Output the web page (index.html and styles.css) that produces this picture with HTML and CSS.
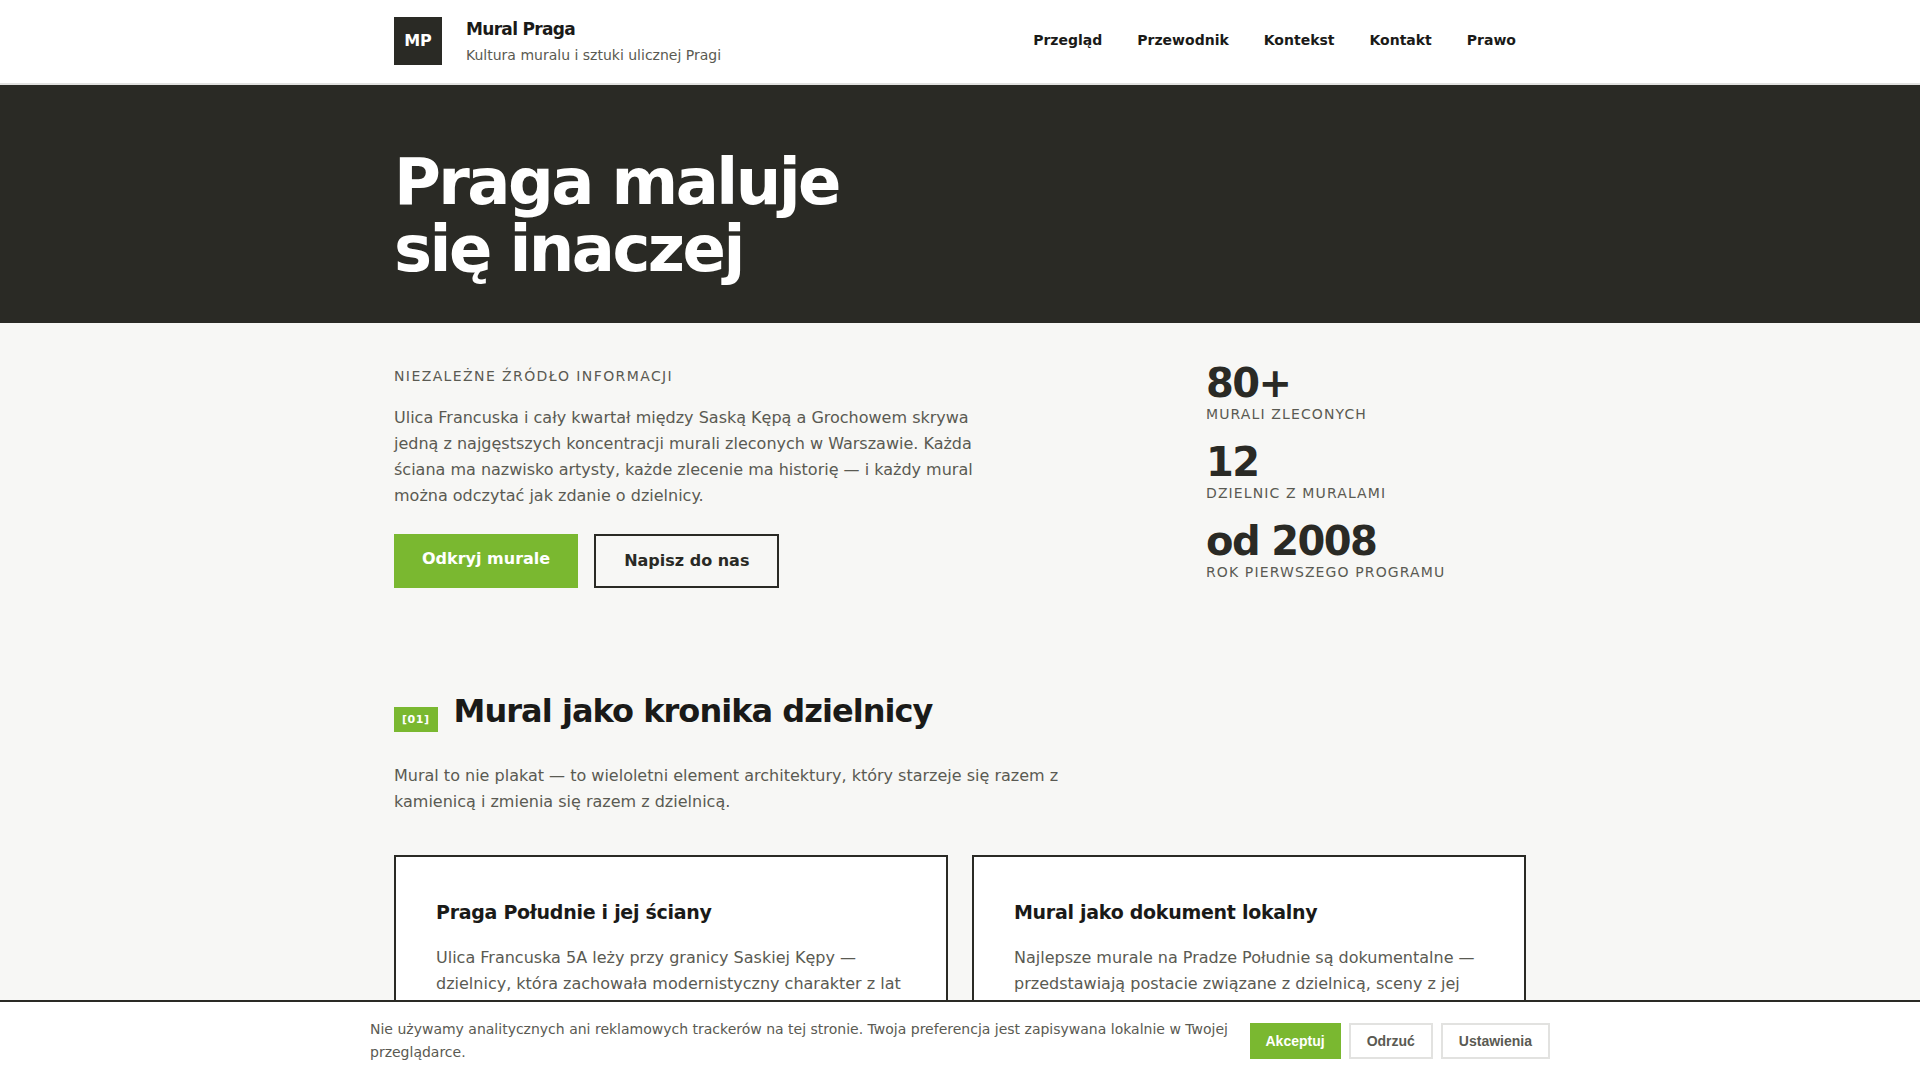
FILE: index.html
```html
<!DOCTYPE html>
<html lang="pl">

<head>
  <meta charset="UTF-8">
  <meta name="viewport" content="width=device-width, initial-scale=1.0">
  <title>Mural Praga</title>
  <link rel="stylesheet" href="styles.css">
</head>

<body>
  <header class="header">
    <div class="container header-row">
      <div class="brand">
        <span class="logo">MP</span>
        <div>
          <p class="brand-name">Mural Praga</p>
          <p class="brand-sub">Kultura muralu i sztuki ulicznej Pragi</p>
        </div>
      </div>
      <nav class="nav">
        <a href="#przeglad">Przegląd</a>
        <a href="#przewodnik">Przewodnik</a>
        <a href="#kontekst">Kontekst</a>
        <a href="#kontakt">Kontakt</a>
        <a href="#prawo">Prawo</a>
      </nav>
    </div>
  </header>

  <main>
    <section class="hero">
      <div class="container">
        <h1>Praga maluje<br>się inaczej</h1>
      </div>
    </section>

    <section class="intro" id="przeglad">
      <div class="container intro-row">
        <div class="intro-text">
          <p class="eyebrow">Niezależne źródło informacji</p>
          <p class="lead">Ulica Francuska i cały kwartał między Saską Kępą a Grochowem skrywa jedną z najgęstszych koncentracji murali zleconych w Warszawie. Każda ściana ma nazwisko artysty, każde zlecenie ma historię — i każdy mural można odczytać jak zdanie o dzielnicy.</p>
          <div class="actions">
            <a class="btn btn-green" href="#przewodnik">Odkryj murale</a>
            <a class="btn btn-outline" href="#kontakt">Napisz do nas</a>
          </div>
        </div>
        <div class="stats">
          <div>
            <p class="stat-value">80+</p>
            <p class="stat-label">Murali zleconych</p>
          </div>
          <div>
            <p class="stat-value">12</p>
            <p class="stat-label">Dzielnic z muralami</p>
          </div>
          <div>
            <p class="stat-value">od 2008</p>
            <p class="stat-label">Rok pierwszego programu</p>
          </div>
        </div>
      </div>
    </section>

    <section class="chronicle" id="przewodnik">
      <div class="container">
        <div class="section-head">
          <span class="tag">[01]</span>
          <h2>Mural jako kronika dzielnicy</h2>
        </div>
        <p class="section-text">Mural to nie plakat — to wieloletni element architektury, który starzeje się razem z kamienicą i zmienia się razem z dzielnicą.</p>
        <div class="cards">
          <article class="card">
            <h3>Praga Południe i jej ściany</h3>
            <p>Ulica Francuska 5A leży przy granicy Saskiej Kępy — dzielnicy, która zachowała modernistyczny charakter z lat</p>
          </article>
          <article class="card">
            <h3>Mural jako dokument lokalny</h3>
            <p>Najlepsze murale na Pradze Południe są dokumentalne — przedstawiają postacie związane z dzielnicą, sceny z jej</p>
          </article>
        </div>
      </div>
    </section>
  </main>

  <div class="cookies">
    <div class="cookies-row">
      <p>Nie używamy analitycznych ani reklamowych trackerów na tej stronie. Twoja preferencja jest zapisywana lokalnie w Twojej przeglądarce.</p>
      <div class="cookies-actions">
        <button type="button" class="accept">Akceptuj</button>
        <button type="button">Odrzuć</button>
        <button type="button">Ustawienia</button>
      </div>
    </div>
  </div>
</body>

</html>
```

FILE: styles.css
```css
* {
  padding: 0;
  margin: 0;
  box-sizing: border-box;
}

body {
  font-family: "DejaVu Sans", sans-serif;
  font-size: 16px;
  line-height: 26px;
  color: #5a5a52;
  background-color: #f7f7f5;
}

a {
  text-decoration: none;
}

h1,
h2,
h3 {
  color: #1a1a18;
}

.container {
  max-width: 1180px;
  margin: 0 auto;
  padding: 0 24px;
}

/* header */
.header {
  background-color: #fff;
  border-bottom: 2px solid #e2e2e0;
}

.header-row {
  display: flex;
  justify-content: space-between;
  align-items: center;
  padding: 16px 24px 17px;
}

.brand {
  display: flex;
  align-items: center;
  gap: 24px;
}

.logo {
  display: flex;
  justify-content: center;
  align-items: center;
  width: 48px;
  height: 48px;
  color: #fff;
  font-weight: 700;
  background-color: #2a2a25;
}

.brand-name {
  margin-bottom: 2px;
  font-size: 17px;
  line-height: 26px;
  font-weight: 700;
  letter-spacing: -0.04em;
  color: #1a1a18;
}

.brand-sub {
  font-size: 14px;
  line-height: 22px;
}

.nav {
  display: flex;
  gap: 15px;
}

.nav a {
  padding: 0 10px;
  font-size: 14px;
  line-height: 22px;
  font-weight: 700;
  color: #1a1a18;
  border-bottom: 2px solid transparent;
}

.nav a:hover {
  border-color: #7ab830;
}

/* hero */
.hero {
  padding: 64px 0 40px;
  background-color: #2a2a25;
}

h1 {
  font-size: 64px;
  line-height: 67px;
  letter-spacing: -0.04em;
  color: #fff;
}

/* intro */
.intro {
  padding: 40px 0;
}

.intro-row {
  display: flex;
  justify-content: space-between;
  align-items: flex-start;
}

.intro-text {
  max-width: 600px;
}

.eyebrow {
  font-size: 14px;
  letter-spacing: 0.1em;
  text-transform: uppercase;
}

.lead {
  margin: 16px 0 25px;
}

.actions {
  display: flex;
  gap: 16px;
}

.btn {
  padding: 12px 28px;
  font-weight: 700;
}

.btn-green {
  color: #fff;
  background-color: #7ab830;
}

.btn-outline {
  color: #2a2a25;
  border: 2px solid #2a2a25;
}

.stats {
  display: flex;
  flex-direction: column;
  gap: 16px;
  width: 320px;
}

.stat-value {
  font-size: 40px;
  line-height: 40px;
  font-weight: 700;
  letter-spacing: -0.04em;
  color: #2a2a25;
}

.stat-label {
  font-size: 14px;
  line-height: 23px;
  letter-spacing: 0.08em;
  text-transform: uppercase;
}

/* section 01 */
.chronicle {
  padding: 62px 0;
}

.section-head {
  display: flex;
  align-items: flex-end;
  gap: 16px;
  margin-bottom: 31px;
}

.tag {
  padding: 4px 8px;
  font-size: 11px;
  line-height: 17px;
  font-weight: 700;
  letter-spacing: 0.05em;
  color: #fff;
  background-color: #7ab830;
}

h2 {
  font-size: 32px;
  line-height: 42px;
  letter-spacing: -0.03em;
}

.section-text {
  max-width: 680px;
  margin-bottom: 40px;
}

.cards {
  display: grid;
  grid-template-columns: 1fr 1fr;
  gap: 24px;
}

.card {
  padding: 40px;
  background-color: #fff;
  border: 2px solid #2a2a25;
}

h3 {
  margin-bottom: 17px;
  font-size: 19px;
  line-height: 31px;
  letter-spacing: -0.015em;
}

/* cookie bar */
.cookies {
  position: fixed;
  left: 0;
  right: 0;
  bottom: 0;
  padding: 16px 24px;
  background-color: #fff;
  border-top: 2px solid #2a2a25;
}

.cookies-row {
  display: flex;
  justify-content: space-between;
  align-items: center;
  gap: 20px;
  max-width: 1180px;
  margin: 0 auto;
  font-size: 14px;
  line-height: 23px;
}

.cookies-actions {
  display: flex;
  gap: 8px;
}

.cookies button {
  padding: 8px 16px;
  font-family: "Liberation Sans", sans-serif;
  font-size: 14px;
  line-height: 16px;
  font-weight: 700;
  color: #5a5a52;
  background-color: #fff;
  border: 2px solid #e2e2e0;
}

.cookies .accept {
  color: #fff;
  background-color: #7ab830;
  border: none;
}
```
